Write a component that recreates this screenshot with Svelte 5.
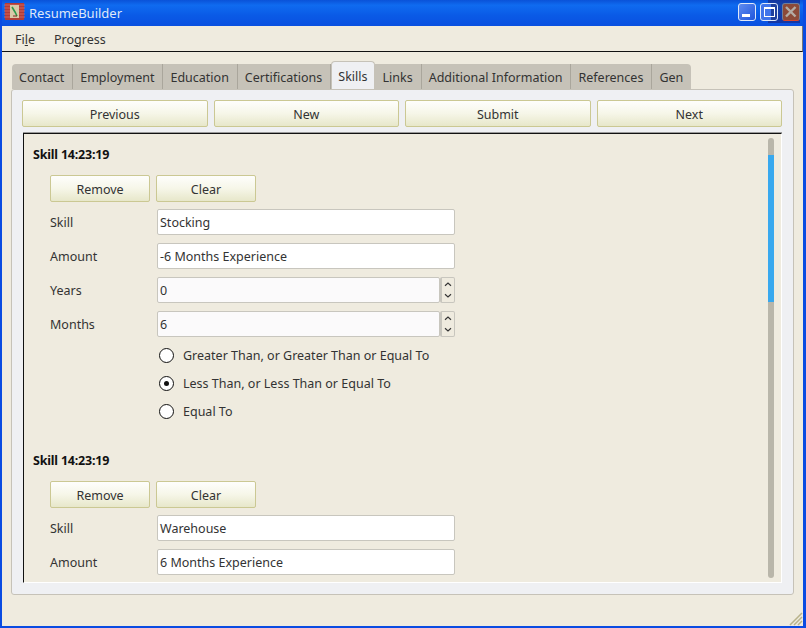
<script>
    const tabs = ['Contact', 'Employment', 'Education', 'Certifications', 'Skills', 'Links', 'Additional Information', 'References', 'Gen'];
    const actions = ['Previous', 'New', 'Submit', 'Next'];
    const options = [
        { label: 'Greater Than, or Greater Than or Equal To', checked: false },
        { label: 'Less Than, or Less Than or Equal To', checked: true },
        { label: 'Equal To', checked: false }
    ];
</script>

<div class="window">
    <header class="titlebar">
        <svg class="app-icon" width="21" height="17" viewBox="0 0 21 17">
            <rect x="1" y="0" width="19" height="17" fill="#b23c36" />
            <path d="M0 2h21M0 5h21M0 8h21M0 11h21M0 14h21" stroke="#d0655c" stroke-width="1" />
            <rect x="6" y="2" width="9" height="13" fill="#d9c9a8" />
            <path d="M8 4l3 5 2 4" stroke="#2f9a4a" stroke-width="1.600" fill="none" />
            <path d="M9 13h4" stroke="#7a2a22" stroke-width="1" />
        </svg>
        <span class="title">ResumeBuilder</span>
        <div class="controls">
            <div class="ctl">
                <svg width="16" height="16" viewBox="0 0 16 16"><rect x="3" y="10" width="8" height="3" fill="#fff" /></svg>
            </div>
            <div class="ctl">
                <svg width="16" height="16" viewBox="0 0 16 16"><rect x="3.500" y="3.500" width="10" height="9" fill="none" stroke="#fff" /><rect x="3" y="3" width="11" height="2" fill="#fff" /></svg>
            </div>
            <div class="ctl close">
                <svg width="16" height="16" viewBox="0 0 16 16"><path d="M3 3l9.500 9.500M12.500 3l-9.500 9.500" stroke="#b4aca4" stroke-width="2.400" /></svg>
            </div>
        </div>
    </header>

    <nav class="menubar">
        <span>Fi<u>l</u>e</span>
        <span>Pro<u>g</u>ress</span>
    </nav>

    <main class="content">
        <div class="tabs">
            {#each tabs as tab}
                <div class="tab" class:active={tab === 'Skills'}>{tab}</div>
            {/each}
        </div>
        <section class="panel">
            <div class="actions">
                {#each actions as action}
                    <button class="btn">{action}</button>
                {/each}
            </div>
            <div class="scroll">
                <div class="scroll-inner">
                    <div class="entry">
                        <h4>Skill 14:23:19</h4>
                        <div class="entry-body">
                            <div class="pair">
                                <button class="btn">Remove</button>
                                <button class="btn">Clear</button>
                            </div>
                            <div class="row"><span class="lbl">Skill</span><div class="input">Stocking</div></div>
                            <div class="row"><span class="lbl">Amount</span><div class="input">-6 Months Experience</div></div>
                            <div class="row">
                                <span class="lbl">Years</span>
                                <div class="input spin-input">0</div>
                                <div class="spin">
                                    <svg width="14" height="24" viewBox="0 0 14 24"><path d="M3.500 7l3.500-3 3.500 3M3.500 17l3.500 3 3.500-3" fill="none" stroke="#333" stroke-width="1.400" /></svg>
                                </div>
                            </div>
                            <div class="row">
                                <span class="lbl">Months</span>
                                <div class="input spin-input">6</div>
                                <div class="spin">
                                    <svg width="14" height="24" viewBox="0 0 14 24"><path d="M3.500 7l3.500-3 3.500 3M3.500 17l3.500 3 3.500-3" fill="none" stroke="#333" stroke-width="1.400" /></svg>
                                </div>
                            </div>
                            <div class="radios">
                                {#each options as opt}
                                    <div class="radio-row">
                                        <span class="radio" class:checked={opt.checked}></span>
                                        <span>{opt.label}</span>
                                    </div>
                                {/each}
                            </div>
                        </div>
                    </div>
                    <div class="entry">
                        <h4>Skill 14:23:19</h4>
                        <div class="entry-body">
                            <div class="pair">
                                <button class="btn">Remove</button>
                                <button class="btn">Clear</button>
                            </div>
                            <div class="row"><span class="lbl">Skill</span><div class="input">Warehouse</div></div>
                            <div class="row"><span class="lbl">Amount</span><div class="input">6 Months Experience</div></div>
                        </div>
                    </div>
                </div>
                <div class="scrollbar"><div class="thumb"></div></div>
            </div>
        </section>
        <svg class="grip" width="16" height="16" viewBox="0 0 16 16">
            <path d="M15 3L3 15M15 7L7 15M15 11L11 15" stroke="#b8b38c" stroke-width="1.500" />
        </svg>
    </main>
</div>

<style>
    :global(body) {
        margin: 0;
    }

    .window {
        width: 806px;
        height: 628px;
        box-sizing: border-box;
        display: flex;
        flex-direction: column;
        background: #0a4be2;
        border: solid #0a4be2;
        border-width: 0 3px 2px 2px;
        font-family: "Noto Sans", sans-serif;
        font-size: 12.500px;
        color: #222;
        overflow: hidden;
    }

    .titlebar {
        height: 26px;
        flex: none;
        margin: 0 -3px 0 -2px;
        display: flex;
        align-items: center;
        padding: 0 6px 0 4px;
        background:
            linear-gradient(rgba(30, 20, 90, 0.45), rgba(30, 20, 90, 0.45)) 768px 0 / 32px 23px no-repeat,
            linear-gradient(#0a52d8, #0f6bf0 20%, #0a5ae6 60%, #0a50e0);
    }

    .app-icon {
        margin-bottom: 4px;
    }

    .title {
        margin-left: 4px;
        color: #dfe8f8;
        font-size: 13px;
        margin-bottom: 1px;
    }

    .controls {
        margin-left: auto;
        display: flex;
        gap: 4px;
        margin-bottom: 3px;
    }

    .ctl {
        width: 18px;
        height: 18px;
        box-sizing: border-box;
        border: 1px solid #dfe8f8;
        border-radius: 3px;
        background: linear-gradient(135deg, #5f8cf0, #1f55dc);
        display: flex;
        align-items: center;
        justify-content: center;
    }

    .ctl:nth-child(2) {
        background: linear-gradient(90deg, #3f74ea 60%, #1f3f9c 60%);
    }

    .close {
        border-color: #6f7f9c;
        border-bottom-color: #d8482c;
        background: #8c4a38;
    }

    .menubar {
        height: 26px;
        flex: none;
        box-sizing: border-box;
        display: flex;
        align-items: center;
        gap: 19px;
        padding: 1px 13px 0;
        background: #efebdf;
        border-bottom: 1px solid #111;
        border-right: 1px solid #777;
        color: #333;
    }

    .content {
        flex: 1;
        position: relative;
        display: flex;
        flex-direction: column;
        padding: 12px 9px 31px 9px;
        background: #efebdf;
        min-height: 0;
    }

    .tabs {
        display: flex;
        height: 25px;
        flex: none;
        padding-left: 1px;
    }

    .tab {
        padding: 1px 8px 0 7px;
        display: flex;
        align-items: center;
        background: #c6c2b8;
        border-right: 1px solid #aaa69c;
        color: #333;
    }

    .tab:first-child {
        border-top-left-radius: 4px;
    }

    .tab:last-child {
        border-top-right-radius: 4px;
        border-right: none;
    }

    .tab.active {
        background: #eff0f3;
        margin-top: -3px;
        border: 1px solid #c6c2b8;
        border-bottom: none;
        border-radius: 4px 4px 0 0;
        padding: 1px 7px 0 6px;
    }

    .panel {
        flex: 1;
        min-height: 0;
        display: flex;
        flex-direction: column;
        gap: 6px;
        padding: 10px 11px 11px 10px;
        background: #eff0f3;
        border: 1px solid #c6c2b8;
        border-radius: 3px;
        box-sizing: border-box;
    }

    .actions {
        display: grid;
        grid-template-columns: repeat(4, 1fr);
        gap: 6px;
    }

    .btn {
        height: 27px;
        padding: 1px 0 0;
        font: inherit;
        color: #333;
        border: 1px solid #cbc893;
        border-radius: 2px;
        background: linear-gradient(#fefefc, #f6f6e8 50%, #e7e7ca);
    }

    .scroll {
        flex: 1;
        min-height: 0;
        position: relative;
        overflow: hidden;
        margin-left: 1px;
        background: #efebdf;
        border-top: 1px solid #111;
        border-left: 1px solid #111;
        border-right: 1px solid #fff;
        border-bottom: 1px solid #fff;
        box-shadow: 0 -1px 0 #9a9a9a;
    }

    .scroll-inner {
        padding: 10px 0 0 9px;
    }

    .entry {
        margin-bottom: 25px;
    }

    h4 {
        margin: 0;
        height: 23px;
        line-height: 22px;
        font-size: 12.500px;
        font-weight: 700;
        color: #111;
        letter-spacing: -0.2px;
    }

    .entry-body {
        padding-left: 17px;
        display: flex;
        flex-direction: column;
        gap: 8px;
        margin-top: 8px;
    }

    .pair {
        display: flex;
        gap: 6px;
        margin-bottom: -1px;
    }

    .pair .btn {
        width: 100px;
    }

    .row {
        display: flex;
        align-items: center;
        height: 26px;
    }

    .lbl {
        width: 107px;
        color: #333;
    }

    .input {
        width: 298px;
        height: 26px;
        box-sizing: border-box;
        padding: 0 2px;
        line-height: 25px;
        background: #fff;
        border: 1px solid #c8c6be;
        border-radius: 2px;
        color: #333;
    }

    .spin-input {
        width: 283px;
        background: #fbfafb;
    }

    .spin {
        width: 15px;
        height: 26px;
        box-sizing: border-box;
        border: 1px solid #c8c6be;
        border-left-width: 2px;
        border-radius: 2px;
        display: flex;
        align-items: center;
        justify-content: center;
    }

    .radios {
        margin-left: 107px;
        margin-top: -4px;
    }

    .radio-row {
        height: 28px;
        display: flex;
        align-items: center;
        gap: 9px;
        color: #333;
        margin-left: 2px;
    }

    .radio {
        width: 15px;
        height: 15px;
        box-sizing: border-box;
        border: 1.500px solid #111;
        border-radius: 50%;
        background: #fff;
        display: flex;
        align-items: center;
        justify-content: center;
    }

    .radio.checked::after {
        content: '';
        width: 5px;
        height: 5px;
        border-radius: 50%;
        background: #111;
    }

    .scrollbar {
        position: absolute;
        top: 4px;
        right: 7px;
        bottom: 4px;
        width: 6px;
        background: #b9b6aa;
        border-radius: 3px;
    }

    .thumb {
        margin-top: 17px;
        height: 147px;
        background: #38a8ee;
    }

    .grip {
        position: absolute;
        right: 0;
        bottom: 0;
    }
</style>
